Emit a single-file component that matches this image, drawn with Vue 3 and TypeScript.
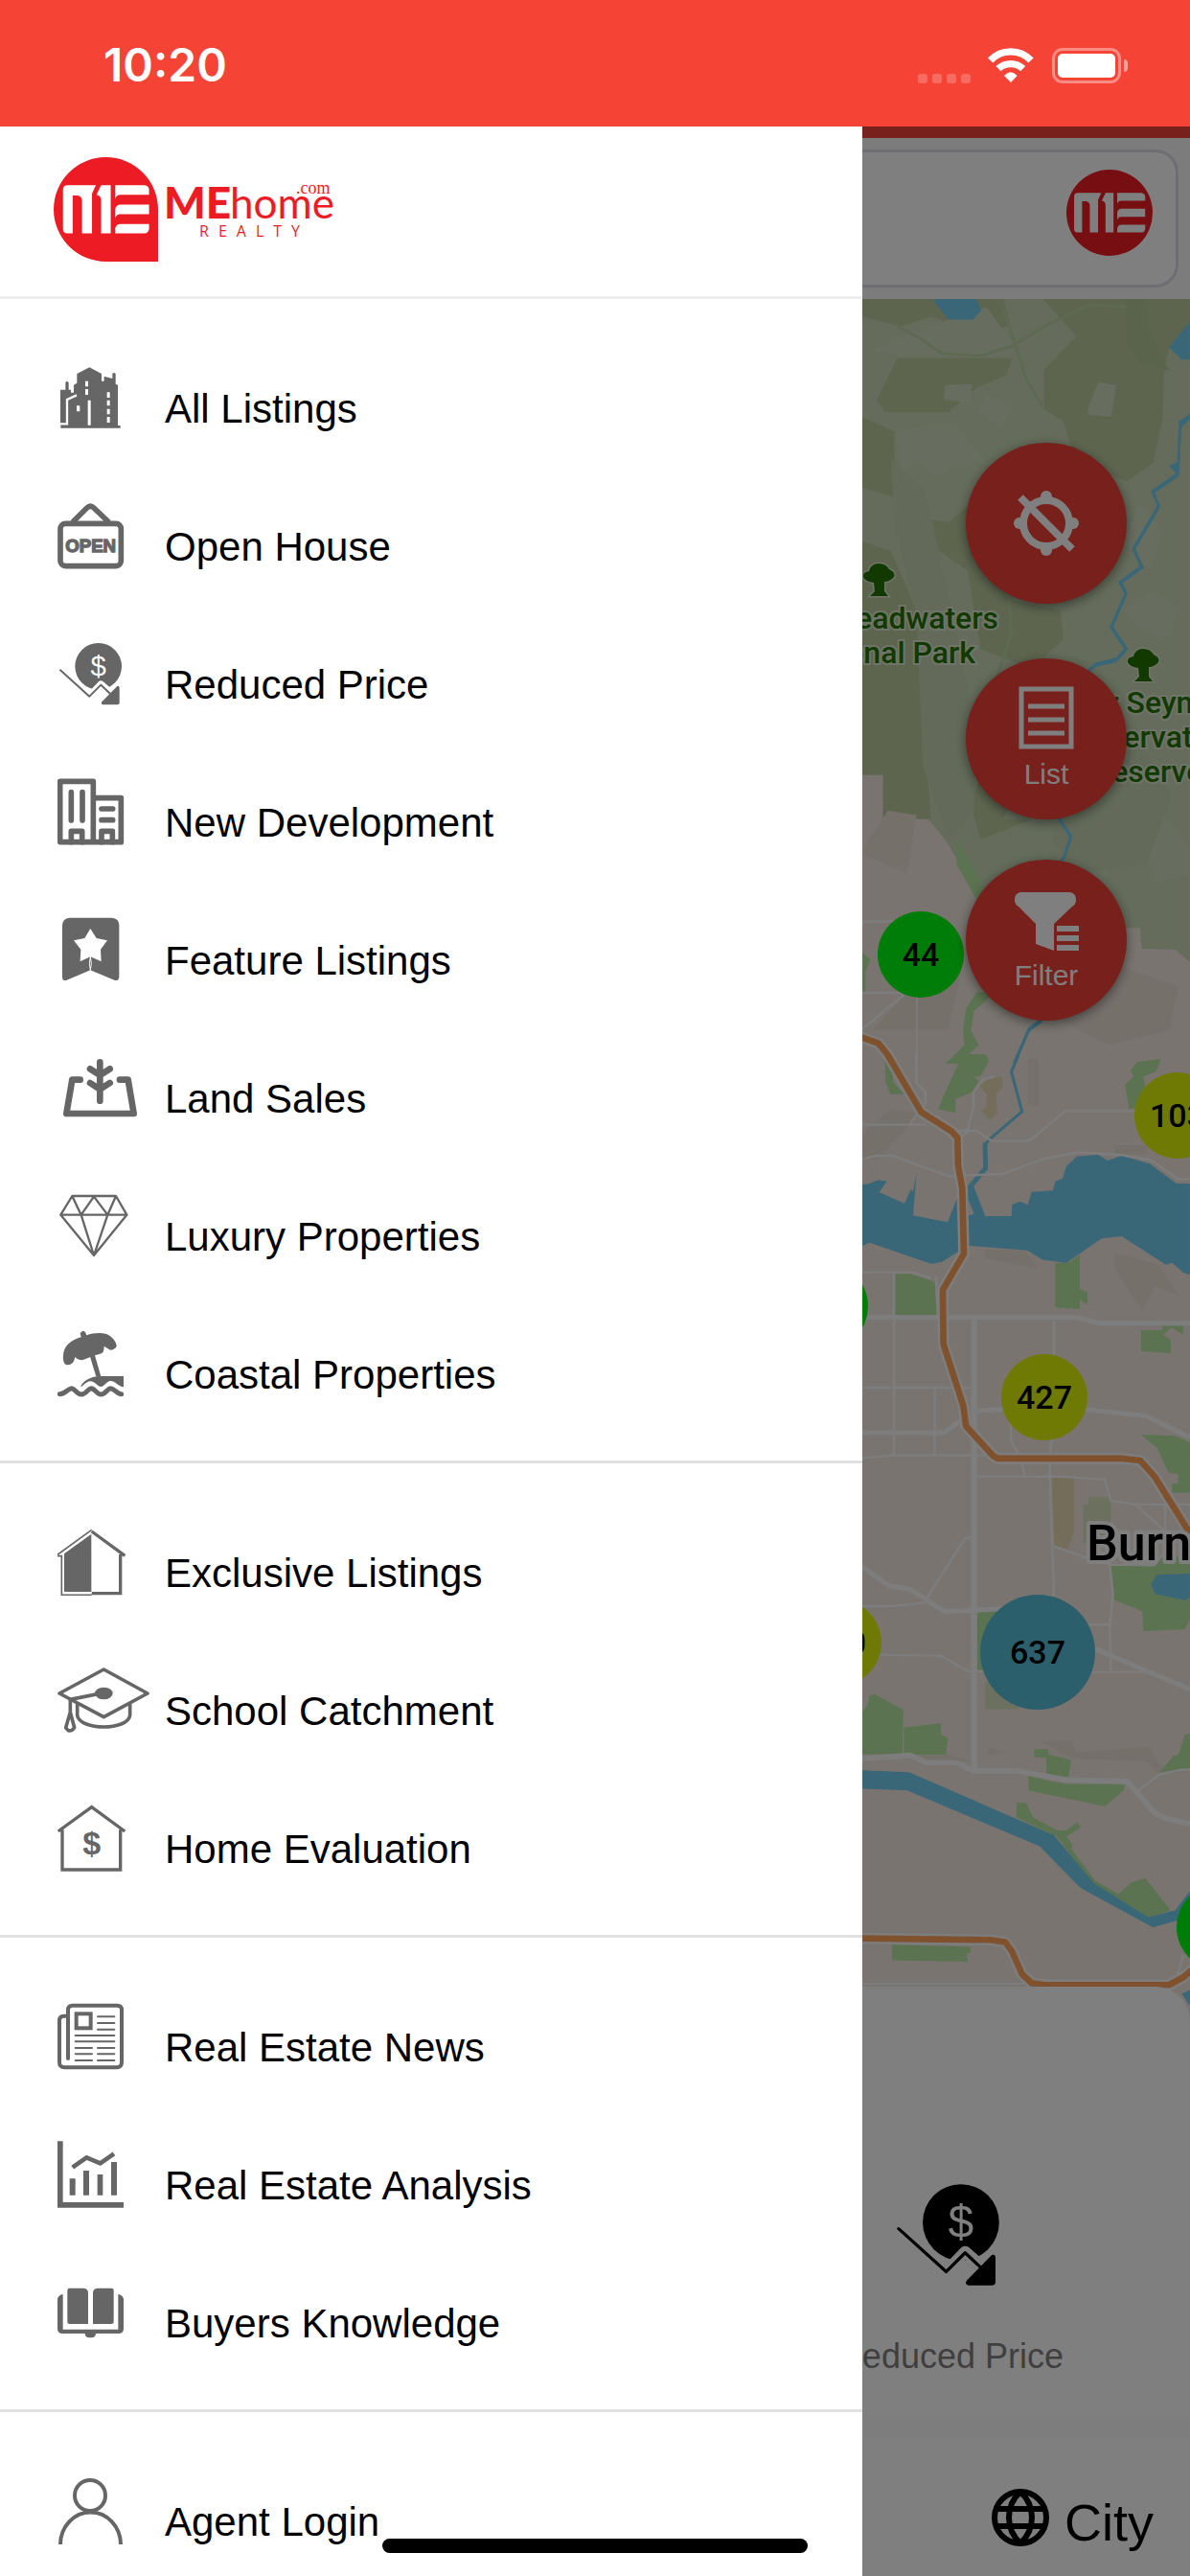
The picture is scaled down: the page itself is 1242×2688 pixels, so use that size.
<script setup lang="ts">
interface Glyph {
  text: string
  x: number
  y: number
  size: number
  weight: number
  fill: string
  outline: number
}

interface MenuItem {
  icon: string
  label: string
  glyph?: Glyph
}

const openGlyph: Glyph = { text: 'OPEN', x: 104, y: 161, size: 56, weight: 700, fill: '#666', outline: 4 }
const coinGlyph: Glyph = { text: '$', x: 128, y: 118, size: 88, weight: 400, fill: '#fff', outline: 0 }
const houseGlyph: Glyph = { text: '$', x: 107, y: 163, size: 102, weight: 700, fill: '#666', outline: 0 }

const sections: MenuItem[][] = [
  [
    { icon: 'listings', label: 'All Listings' },
    { icon: 'open', label: 'Open House', glyph: openGlyph },
    { icon: 'reduced', label: 'Reduced Price', glyph: coinGlyph },
    { icon: 'development', label: 'New Development' },
    { icon: 'feature', label: 'Feature Listings' },
    { icon: 'land', label: 'Land Sales' },
    { icon: 'luxury', label: 'Luxury Properties' },
    { icon: 'coastal', label: 'Coastal Properties' },
  ],
  [
    { icon: 'exclusive', label: 'Exclusive Listings' },
    { icon: 'school', label: 'School Catchment' },
    { icon: 'evaluation', label: 'Home Evaluation', glyph: houseGlyph },
  ],
  [
    { icon: 'news', label: 'Real Estate News' },
    { icon: 'analysis', label: 'Real Estate Analysis' },
    { icon: 'knowledge', label: 'Buyers Knowledge' },
  ],
  [{ icon: 'agent', label: 'Agent Login' }],
]

interface Cluster {
  x: number
  y: number
  r: number
  fill: string
  count?: string
}

const clusters: Cluster[] = [
  { x: 961, y: 996, r: 45, fill: '#00fa12', count: '44' },
  { x: 1229, y: 1164, r: 45, fill: '#def40a', count: '103' },
  { x: 861, y: 1363, r: 45, fill: '#00fa12' },
  { x: 1090, y: 1458, r: 45, fill: '#def40a', count: '427' },
  { x: 875, y: 1714, r: 45, fill: '#def40a', count: '130' },
  { x: 1083, y: 1724, r: 60, fill: '#54bed6', count: '637' },
  { x: 1273, y: 2011, r: 45, fill: '#00fa12' },
]
</script>

<template>
  <svg class="sprite" aria-hidden="true">
    <symbol id="mark" viewBox="169 492 324 324">
      <path d="M212 579H300L288 605V728H257V625Q255 611 240 611H228V728H212Q198 728 198 714V593Q198 579 212 579Z" />
      <path d="M316 579H346V728H316V625Q316 612 302 609Z" />
      <path d="M360 579H450Q465 581 465 594V609H375Q364 609 360 621Z" />
      <path d="M360 653Q362 639 377 639H465V669H375Q364 669 360 681Z" />
      <path d="M360 713Q362 699 377 699H465V714Q463 728 450 728H360Z" />
    </symbol>

    <symbol id="listings" viewBox="60 54 300 216">
      <path fill="currentColor" d="M69 140H85V118Q90 110 95 118V140H102V149H111V125L121 119V90L160 70L198 90V113H206V98L232 105V90Q237 84 242 90V122L249 125V252H257V260H70V252H69Z" />
      <path fill="none" stroke="#fff" stroke-width="7" d="M69 247H90V171L120 157" />
      <g fill="#fff">
        <path d="M147 113h9v17h-9zM147 138h9v18h-9zM215 148h9v17h-9zM215 173h9v17h-9zM215 200h9v17h-9zM215 225h9v18h-9zM155 173h9v78h-9zM120 190h10v18h-10z" />
      </g>
    </symbol>

    <symbol id="open" viewBox="60 486 300 216">
      <g fill="none" stroke="currentColor" stroke-width="17">
        <rect x="69" y="559" width="190" height="133" rx="16" />
        <path d="M107 555L152 510Q163 500 174 510L221 555" />
      </g>
    </symbol>

    <symbol id="reduced" viewBox="60 918 300 216">
      <circle cx="188" cy="1006" r="73" fill="currentColor" />
      <path fill="none" stroke="#fff" stroke-width="22" stroke-linejoin="round" d="M130 1087L160 1100L196 1062L240 1100" />
      <path fill="none" stroke="currentColor" stroke-width="6" stroke-linecap="round" stroke-linejoin="round" d="M69 1018L160 1100L196 1064L228 1094" />
      <path fill="currentColor" d="M247 1068Q254 1066 254 1074V1120Q254 1126 248 1126H202Q195 1124 199 1117Z" />
    </symbol>

    <symbol id="development" viewBox="60 90 300 216">
      <g fill="none" stroke="currentColor" stroke-width="17" stroke-linejoin="round" stroke-linecap="round">
        <path d="M68 106H172V296H68ZM172 158H259V296H172" />
        <path d="M103 140V228M138 140V228M198 192H233M198 227H233M103 296V262H137V296M198 296V262H232V296" />
      </g>
    </symbol>

    <symbol id="feature" viewBox="60 522 300 216">
      <path fill="currentColor" d="M98 533H230Q253 535 253 556V720Q251 731 240 729L163 697L87 729Q76 731 75 720V556Q76 535 98 533Z" />
      <path fill="#fff" d="M163 567L182 597L216 604L195 632L197 670L163 655L131 670L133 632L111 604L145 597Z" />
      <path stroke="#fff" stroke-width="3" fill="none" d="M163 655Q157 676 163 697Q169 676 163 655" />
    </symbol>

    <symbol id="land" viewBox="60 954 300 216">
      <path fill="none" stroke="currentColor" stroke-width="20" stroke-linejoin="round" stroke-linecap="round" d="M131 1040H106L88 1146H299L281 1040H255M193 985V1106M162 1006L193 1026L224 1006M162 1050L193 1070L224 1050" />
    </symbol>

    <symbol id="luxury" viewBox="60 126 300 216">
      <path fill="none" stroke="currentColor" stroke-width="7" stroke-linejoin="round" d="M106 144H243L277 203L174 330L70 203ZM70 203H277M106 144L134 203L174 146L217 203L243 144M134 203L174 330L217 203" />
    </symbol>

    <symbol id="coastal" viewBox="60 558 300 216">
      <g fill="currentColor">
        <path d="M92 673C74 674 76 640 82 625C90 605 115 590 134 586L131 574Q140 560 148 572L151 580C170 573 195 571 213 576C232 583 245 602 245 614Q240 625 225 626L206 614Q206 632 198 637L173 644L138 658Q124 658 115 648Q111 672 92 673Z" />
        <path d="M161 644L176 640L196 709H181Z" />
        <path d="M132 741C140 722 165 709 190 708H267V742C252 742 242 723 226 723C213 723 208 741 196 741C184 741 178 724 163 724C148 724 142 741 132 741Z" />
      </g>
      <path fill="none" stroke="currentColor" stroke-width="15" stroke-linecap="round" d="M67 764C85 764 92 747 104 746C115 747 120 765 135 765C150 765 155 747 165 746C178 747 183 765 196 765C210 765 216 747 226 746C240 747 245 764 260 764" />
    </symbol>

    <symbol id="exclusive" viewBox="60 99 300 216">
      <path fill="none" stroke="currentColor" stroke-width="10" d="M167 114L271 190M257 186V308H167" />
      <path fill="none" stroke="currentColor" stroke-width="5" d="M167 109L60 187V191H73V313H167" />
      <path fill="currentColor" d="M81 184L166 122V303H81Z" />
    </symbol>

    <symbol id="school" viewBox="60 531 300 216">
      <g fill="none" stroke="currentColor" stroke-width="11" stroke-linejoin="round">
        <path d="M205 546L342 621L205 695L66 621ZM122 652V690C130 738 280 738 287 690V652" />
        <path d="M190 622L100 640V680L86 728Q99 748 113 728L100 680" />
      </g>
      <ellipse cx="205" cy="621" rx="28" ry="19" fill="currentColor" />
    </symbol>

    <symbol id="evaluation" viewBox="60 963 300 216">
      <path fill="none" stroke="currentColor" stroke-width="10" d="M62 1053L167 977L271 1053M75 1048V1173H257V1048" />
    </symbol>

    <symbol id="news" viewBox="60 84 300 216">
      <g fill="none" stroke="currentColor" stroke-linecap="round">
        <path stroke-width="12" d="M93 264V112Q93 98 107 98H247Q261 98 261 112V276Q261 292 245 292H82Q66 292 66 276V145Q66 131 80 131H90" />
        <rect stroke-width="12" x="119" y="124" width="45" height="45" />
        <path stroke-width="6" d="M186 133H238M186 153H238M186 173H238M116 192H238M116 211H238M116 231H168M186 231H238M116 250H168M186 250H238M116 270H168M186 270H238" />
      </g>
    </symbol>

    <symbol id="analysis" viewBox="60 516 300 216">
      <path fill="currentColor" d="M60 523H77V714H267V731H60ZM98 640H116V692H98ZM141 615H159V692H141ZM185 627H202V692H185ZM228 588H246V692H228Z" />
      <path fill="none" stroke="currentColor" stroke-width="14" d="M107 605L151 574L194 592L237 562" />
    </symbol>

    <symbol id="knowledge" viewBox="60 948 300 216">
      <g fill="currentColor">
        <path d="M98 983H142Q156 984 156 998V1095H98Q91 1095 91 1088V990Q91 983 98 983ZM185 983H229Q236 983 236 990V1088Q236 1095 229 1095H171V998Q171 984 185 983Z" />
        <path d="M60 1016Q64 1004 77 1002V1112H250V1002Q263 1004 267 1016V1110Q267 1125 251 1125H180Q179 1138 166 1138H160Q147 1138 146 1125H76Q60 1125 60 1110Z" />
      </g>
    </symbol>

    <symbol id="agent" viewBox="60 2583 100 72">
      <g fill="none" stroke="currentColor" stroke-width="4">
        <circle cx="94" cy="2604" r="16" />
        <path d="M63 2655A31 33 0 0 1 126 2655" />
      </g>
    </symbol>
  </svg>

  <div class="app">
    <header class="status">
      <time class="clock">10:20</time>
      <div class="status-icons">
        <span class="signal"><i></i><i></i><i></i><i></i></span>
        <svg class="wifi" viewBox="515 148 144 108" aria-label="Wi-Fi">
          <g fill="none" stroke="#fff" stroke-width="22">
            <path d="M523 187A87 87 0 0 1 650 187" />
            <path d="M548 213A56 56 0 0 1 625 213" />
          </g>
          <path fill="#fff" d="M566 235Q586 213 607 235L587 256Z" />
        </svg>
        <span class="battery"><i></i></span>
      </div>
    </header>

    <div class="screen">
      <main class="page">
        <div class="topbar"></div>
        <div class="search">
          <label class="search-box">
            <input type="search" aria-label="Search listings" />
            <svg class="badge" viewBox="0 0 90 90" aria-hidden="true">
              <circle cx="45" cy="45" r="45" fill="#ed1c24" />
              <use href="#mark" width="90" height="90" fill="#fff" />
            </svg>
          </label>
        </div>

        <div class="map">
          <svg class="map-canvas" viewBox="0 312 1242 1797" preserveAspectRatio="xMaxYMin slice" role="img" aria-label="Map">
            <rect y="312" width="1242" height="1797" fill="#f2e9df" />

            <!-- mountain terrain -->
            <g transform="translate(890 310) scale(.3333 .5102)">
              <path fill="#cad9b6" d="M0 0H1056V1360L1010 1335L905 1333L900 1290H858L700 1350L600 1300L400 1230L290 1110L235 1067H95V977H0Z" />
              <g fill="#bbca9f">
                <path d="M590 0H1056V50L990 105L975 155L970 250L940 340L860 377L700 340L660 255L600 230L598 150L700 80Z" />
                <path d="M30 0H470L495 60L380 75L250 40L150 60L30 40ZM140 125H500L480 160L390 185L300 235H100L75 210Z" />
                <path d="M30 245L130 275V390L180 450L300 460L420 395L500 430V620L650 640L660 700L560 760L400 720L360 560L230 500L160 415L30 390Z" />
                <path d="M30 500L120 520L200 640L215 800L245 1067H95V977H30Z" />
                <path d="M470 1068L560 1068L400 1110L370 1040L410 960L520 1000Z" />
              </g>
              <g fill="#cfdcbf">
                <path d="M165 80L240 60L420 20L500 95L490 120H140L60 110ZM290 180L375 178L365 215L285 210ZM740 220L770 175L825 180L810 245L735 240ZM420 200L495 225L465 265L390 235ZM135 280L200 265L320 262L420 340H310L270 370L200 335L160 365Z" />
                <path d="M850 640L950 600L1020 640L980 700L900 680ZM880 1060L960 1050L1056 1130V1180L950 1200ZM740 1120L800 1160L790 1200L730 1180ZM240 830L280 790L320 900L300 990L250 1000ZM850 500L900 420L970 480L930 560Z" />
              </g>
              <path fill="#c6d5b2" d="M120 330L230 400L330 700L380 860L380 1050L300 1110L220 960L200 650L130 470ZM690 920L840 850L1000 1020L920 1160L700 1180L620 1110Z" />
              <path fill="#b4c898" d="M850 0H915L930 70L990 150L900 135L860 100Z" />
              <path fill="none" stroke="#bdd3a6" stroke-width="3" vector-effect="non-scaling-stroke" d="M470 20L510 100L545 170L600 230M140 60L200 80L280 115L400 120L500 100L600 60L740 15L860 20M490 610L495 690L450 780" />
              <g fill="#b7e6a0">
                <path d="M325 1105L370 1160L395 1185L410 1215L390 1235L325 1160ZM390 1420L440 1425L380 1460L370 1500L395 1530L330 1568H290L350 1530L345 1500L355 1455ZM30 1340L55 1355L40 1380V1420H30Z" />
              </g>
              <g fill="#ece1d6">
                <path d="M30 1130L110 1050L200 1060L170 1180L30 1140ZM700 1380L840 1370L1020 1410L990 1500L800 1530L650 1480ZM60 1500L200 1400L340 1380L300 1500Z" />
              </g>
              <g fill="#75cfef">
                <path d="M255 10L300 46H375L403 28L388 4H258ZM990 103L1056 50V128H1030ZM1026 252L1056 238V250L1030 266ZM990 345L1018 337V365Z" />
              </g>
              <path fill="none" stroke="#75cfef" stroke-width="9" d="M1026 252L1018 363L940 398L958 428L880 515L905 552L838 584L856 606L810 675L856 720L826 742L760 752L700 790L640 1060L683 1104L662 1145L620 1180L590 1480L552 1498L505 1568" />
              <g fill="none" stroke="#fbfbfd" stroke-width="5">
                <path d="M30 1280L40 1277H160M30 1423H230M30 1497L160 1427M201 1430V1568" />
              </g>
            </g>

            <!-- city, inlet and river -->
            <g transform="translate(890 1100) scale(.3333)">
              <g fill="#ebe0d5">
                <path d="M550 15H582V165L550 155ZM820 620L960 660L1020 755L945 725L905 805L820 670ZM415 610L540 615L580 672L415 640ZM820 285H920V315H820ZM30 250L120 170L210 185L80 330H30Z" />
                <path d="M585 2150H685L700 2185L930 2168L955 2220L1056 2250L955 2250L920 2215L685 2205ZM415 2200L430 2168L478 2184ZM160 2180L195 2166L380 2215L200 2216Z" />
              </g>
              <g fill="#b7e6a0">
                <path d="M100 0H125V85L160 125H118L102 85ZM330 30L360 0H415L427 20L400 70H380L395 85L373 120L322 140V184L267 172ZM870 50L890 25L965 15L950 55L910 70L925 160L865 172L853 95L880 70Z" />
                <path d="M133 688H180L257 712L262 817H133ZM634 655L680 650L711 628V735L735 745V785L711 768V798L634 793ZM903 864H970V850H1035V878L998 856L972 878L996 895V936L903 930Z" />
                <path d="M903 1191L1010 1195L1056 1215V1373H1000V1345H1019V1315L988 1310L955 1235Z" />
                <path d="M808 1600H945L970 1565L1056 1580V1768L1040 1800L910 1806L907 1745L818 1708ZM390 1748L470 1740L440 1930H390Z" />
                <path d="M30 2060L48 2035L52 2008L70 2004L159 2053L155 2192H30ZM160 2108L276 2095V2130L298 2140L292 2193H160ZM568 2176H612V2192L684 2210L676 2262H606V2203L568 2200ZM550 2260L660 2285L852 2286L848 2305L790 2355L550 2305ZM1056 2127L1040 2130L1020 2193L1003 2198L962 2248L1056 2235Z" />
                <path d="M513 2343H543L565 2390L640 2430H668L703 2405L714 2420L670 2450L688 2475L686 2490L760 2588L832 2630L873 2592L917 2580L995 2680L925 2705L750 2600L640 2450L513 2390ZM123 2788L369 2795V2812L357 2815L360 2841L123 2837Z" />
              </g>
              <g fill="#e8dab4">
                <path d="M398 100L430 72H470L468 105L448 125L453 185L430 208L403 178L418 165L420 125ZM622 1326H693V1500L672 1551L632 1540Z" />
              </g>
              <path fill="#d7e2bd" d="M738 1386H808V1480L790 1530H722V1410H738ZM415 1968L520 1960V2051H415Z" />
              <g fill="#75cfef">
                <path d="M30 407H45L80 394L107 398L83 432L162 467L182 423L189 430L200 372L189 505L297 526L325 455L345 420L362 420L378 412L415 507H497L499 470L525 461L548 472L560 431L627 427L634 398L657 389L669 350L702 320L767 314L798 333L842 318L930 343L1014 405H1056V690L1036 685L1000 653L982 660L842 570L780 577L669 653L596 644L546 614L365 600L330 618L280 650L247 657L53 590L30 600Z" />
                <path d="M30 2242L176 2248L630 2445L755 2595L925 2702L1010 2680L1056 2620V2700L940 2734L713 2610L585 2480L170 2305L30 2300Z" />
                <path d="M933 1660L953 1630L1056 1626V1700L1043 1710L947 1690ZM1030 2942L1056 2930V3030H1090Z" />
              </g>
              <path fill="#f2e9df" d="M362 505L380 500L362 455Z" />
              <path fill="none" stroke="#75cfef" stroke-width="9" d="M520 0L497 55L530 180L430 265L412 285" />
              <path fill="none" stroke="#75cfef" stroke-width="15" d="M414 278L416 357L362 422" />

              <g fill="none" stroke="#fbfbfd" stroke-linejoin="round">
                <path stroke-width="7" d="M199 0V88L227 118L228 150L176 222M30 221H230M330 240H388L436 272H545L560 266L665 178H880M445 70L405 80L378 120V165L358 245L340 260M30 328L75 318H125L300 382L470 375L600 327L706 308L840 315L935 332L1018 391H1056M30 683H185L245 702" />
                <path stroke-width="7" d="M129 683V1255M257 1048V1255M30 1044H375M30 1265L125 1256H430M630 835V950M260 695L268 820M495 1155V1210L518 1250M625 1200L617 1250L618 1320L630 1700M390 1322L660 1323L790 1332L808 1398L880 1410H1056M530 1285L538 1320M978 1410V1500M885 1410L985 1500" />
                <path stroke-width="7" d="M375 1512L352 1515L222 1718L125 1728H30M630 1540L740 1580L805 1598L945 1600L975 1560M805 1598L815 1690L805 1790L808 1932M740 1786H805M85 1880L277 1884L362 1932H415M750 1935H930M895 2305L960 2255L1030 2240H1056M30 2910H550M1015 2890L1035 2820" />
                <path stroke-width="15" d="M45 824H700L770 842H1056M30 1185H285L350 1140M390 1116L470 1112M730 1112L920 1133L1056 1200M30 1605L115 1665L180 1675L275 1738L295 1745L480 1736M755 1860L930 1935L1056 1988" />
                <path stroke-width="19" d="M380 825V2245" />
                <path stroke-width="17" d="M30 2206L180 2195L230 2218H325L378 2244H515L670 2272L860 2277L945 2375L980 2393L1056 2410" />
              </g>
              <g fill="none" stroke-linejoin="round">
                <path stroke="#fbfbfd" stroke-width="35" d="M0 -66L30 -52L80 -34L108 0L215 182L310 242L328 262L330 350L343 420L348 625L282 738L284 908L346 1100L355 1165L440 1258L455 1266H845L900 1272L945 1322L1056 1500M30 2768L430 2773L478 2780L498 2808L530 2880L560 2908L600 2914H990L1035 2890L1065 2865" />
                <path stroke="#ffa45a" stroke-width="20" d="M0 -66L30 -52L80 -34L108 0L215 182L310 242L328 262L330 350L343 420L348 625L282 738L284 908L346 1100L355 1165L440 1258L455 1266H845L900 1272L945 1322L1056 1500M30 2768L430 2773L478 2780L498 2808L530 2880L560 2908L600 2914H990L1035 2890L1065 2865" />
              </g>
            </g>

            <!-- parks -->
            <g fill="#247400" stroke="#dfe8d2" stroke-width="3" paint-order="stroke">
              <path d="M901 602Q900 597 907 596Q909 588 917 588Q925 588 928 594Q935 597 933 602Q929 607 923 607V617L927 622H908L913 617L912 608Q903 607 901 602Z" />
              <path d="M1177 691Q1176 686 1183 685Q1185 677 1193 677Q1201 677 1204 683Q1211 686 1209 691Q1205 696 1199 696V706L1203 711H1184L1189 706L1188 697Q1179 696 1177 691Z" />
            </g>
            <g class="park">
              <text x="1042" y="656" text-anchor="end">Lynn Headwaters</text>
              <text x="1018" y="692" text-anchor="end">Regional Park</text>
              <text x="1080" y="744">Lower Seymour</text>
              <text x="1099" y="780">Conservation</text>
              <text x="1140" y="816">Reserve</text>
            </g>
            <text class="city-name" x="1134" y="1628">Burnaby</text>

            <g v-for="c in clusters" :key="`${c.x}-${c.y}`" class="cluster">
              <circle :cx="c.x" :cy="c.y" :r="c.r" :fill="c.fill" />
              <text v-if="c.count" :x="c.x" :y="c.y + 12" text-anchor="middle">{{ c.count }}</text>
            </g>
          </svg>

          <div class="fabs">
            <button class="fab locate" type="button" aria-label="Location off">
              <svg width="68" height="68" viewBox="0 0 68 68">
                <circle cx="34" cy="34" r="24" fill="none" stroke="#fff" stroke-width="8" />
                <g fill="#fff">
                  <circle cx="34" cy="6" r="6" />
                  <circle cx="34" cy="62" r="6" />
                  <circle cx="6" cy="34" r="6" />
                  <circle cx="62" cy="34" r="6" />
                </g>
                <path stroke="#fff" stroke-width="8" d="M7 7L61 61" />
              </svg>
            </button>
            <button class="fab" type="button">
              <svg width="68" height="66" viewBox="0 0 68 66">
                <g fill="none" stroke="#fff" stroke-width="5">
                  <rect x="8" y="3" width="52" height="60" />
                  <path d="M15 21H53M15 35H53M15 49H53" />
                </g>
              </svg>
              List
            </button>
            <button class="fab" type="button">
              <svg width="68" height="66" viewBox="0 0 68 66">
                <g fill="#fff">
                  <path d="M7 5H59Q65 6 65 13Q65 18 61 20L42 38V66L23 59V38L5 20Q1 18 1 13Q1 6 7 5Z" />
                  <path d="M45 40H68V46H45ZM45 50H68V56H45ZM45 60H68V66H45Z" />
                </g>
              </svg>
              Filter
            </button>
          </div>
        </div>

        <section class="sheet">
          <div class="shortcuts">
            <a class="shortcut" href="#reduced-price">
              <svg width="118" height="118" viewBox="0 0 216 216">
                <use href="#reduced" width="300" height="216" />
                <text :x="coinGlyph.x" :y="coinGlyph.y" :font-size="coinGlyph.size" :fill="coinGlyph.fill" text-anchor="middle">{{ coinGlyph.text }}</text>
              </svg>
              <span>Reduced Price</span>
            </a>
          </div>
          <nav class="tabs">
            <a class="tab" href="#city">
              <svg width="60" height="60" viewBox="0 0 60 60" fill="none" stroke="#000" stroke-width="6">
                <circle cx="30" cy="30" r="27" />
                <path d="M30 3C14 18 14 42 30 57C46 42 46 18 30 3ZM5 21H55M5 39H55" />
              </svg>
              <span>City</span>
            </a>
          </nav>
        </section>
      </main>

      <div class="scrim"></div>

      <aside class="drawer">
        <a class="brand" href="#home" aria-label="MEhome Realty">
          <svg width="300" height="110" viewBox="0 0 300 110">
            <path fill="#ed1c24" d="M54.500 0A54.500 54.500 0 0 1 109 54.500V109H54.500A54.500 54.500 0 0 1 54.500 0Z" />
            <use href="#mark" width="109" height="109" fill="#fff" />
            <g fill="#ed1c24">
              <text class="brand-me" x="115" y="64">ME</text>
              <text class="brand-home" x="184" y="64">home</text>
              <text class="brand-com" x="253" y="38">.com</text>
              <text class="brand-realty" x="152" y="83">REALTY</text>
            </g>
          </svg>
        </a>
        <nav>
          <ul v-for="(items, i) in sections" :key="i" class="section">
            <li v-for="item in items" :key="item.icon">
              <a class="item" :href="`#${item.icon}`">
                <svg class="item-icon" viewBox="0 0 300 216" aria-hidden="true">
                  <use :href="`#${item.icon}`" width="300" height="216" />
                  <text
                    v-if="item.glyph"
                    :x="item.glyph.x"
                    :y="item.glyph.y"
                    :font-size="item.glyph.size"
                    :font-weight="item.glyph.weight"
                    :fill="item.glyph.fill"
                    :stroke="item.glyph.fill"
                    :stroke-width="item.glyph.outline"
                    text-anchor="middle"
                  >{{ item.glyph.text }}</text>
                </svg>
                <span class="item-label">{{ item.label }}</span>
              </a>
            </li>
          </ul>
        </nav>
      </aside>
    </div>

    <div class="home-indicator"></div>
  </div>
</template>

<style>
body {
  margin: 0;
}
</style>

<style scoped>
.sprite {
  position: absolute;
  width: 0;
  height: 0;
}

.app {
  position: relative;
  display: flex;
  flex-direction: column;
  height: 100vh;
  overflow: hidden;
  background: #fff;
  color: #000;
  font-family: "Liberation Sans", Arial, sans-serif;
}

a {
  color: inherit;
  text-decoration: none;
}

svg {
  display: block;
}

/* status bar */
.status {
  display: flex;
  flex: none;
  align-items: center;
  justify-content: space-between;
  box-sizing: border-box;
  height: 132px;
  padding: 4px 65px 0 108px;
  background: #f54336;
}

.clock {
  color: #fff;
  font: 600 48px/60px Inter, sans-serif;
}

.status-icons {
  display: flex;
  align-items: center;
}

.signal {
  display: flex;
  gap: 5px;
  align-self: flex-end;
  margin-right: 18px;
}

.signal i {
  width: 10px;
  height: 10px;
  border-radius: 3px;
  background: rgba(255, 255, 255, 0.22);
}

.wifi {
  width: 48px;
  height: 36px;
}

.battery {
  position: relative;
  box-sizing: border-box;
  width: 72px;
  height: 37px;
  margin: 0 7px 0 19px;
  padding: 3px;
  border: 3px solid rgba(255, 255, 255, 0.4);
  border-radius: 11px;
}

.battery i {
  display: block;
  height: 25px;
  border-radius: 5px;
  background: #fff;
}

.battery::after {
  position: absolute;
  top: 9px;
  right: -10px;
  width: 4px;
  height: 13px;
  border-radius: 0 4px 4px 0;
  background: rgba(255, 255, 255, 0.5);
  content: "";
}

/* page below the drawer */
.screen {
  position: relative;
  display: flex;
  flex: 1;
  min-height: 0;
}

.page {
  display: flex;
  flex: 1;
  flex-direction: column;
  min-width: 0;
}

.topbar {
  flex: none;
  height: 12px;
  background: #f04036;
}

.search {
  flex: none;
  padding: 12px;
  background: #f9f9f9;
}

.search-box {
  display: flex;
  align-items: center;
  box-sizing: border-box;
  height: 144px;
  padding: 0 24px 12px;
  border: 3px solid #dcdce4;
  border-radius: 24px;
  background: #fff;
}

.search-box input {
  flex: 1;
  min-width: 0;
  border: 0;
  outline: 0;
  background: transparent;
  font: 42px "Liberation Sans", sans-serif;
}

.badge {
  width: 90px;
  height: 90px;
}

.map {
  position: relative;
  flex: 1;
  min-height: 0;
  overflow: hidden;
}

.map-canvas {
  width: 100%;
  height: 100%;
}

.park {
  fill: #247400;
  stroke: #dfe8d2;
  stroke-width: 4px;
  paint-order: stroke;
  font: 500 32px Roboto, sans-serif;
}

.city-name {
  fill: #000;
  stroke: #fff;
  stroke-width: 8px;
  stroke-linejoin: round;
  paint-order: stroke;
  font: 500 52px Roboto, sans-serif;
}

.cluster text {
  fill: #000;
  font: 500 34px Roboto, sans-serif;
}

.fabs {
  position: absolute;
  top: 150px;
  right: 66px;
  display: flex;
  flex-direction: column;
  gap: 42px;
}

.fab {
  display: flex;
  flex-direction: column;
  gap: 8px;
  align-items: center;
  justify-content: center;
  width: 168px;
  height: 168px;
  padding: 0;
  border: 0;
  border-radius: 50%;
  background: #f04036;
  box-shadow: 0 3px 12px rgba(0, 0, 0, 0.45);
  color: #fff;
  font: 30px/36px "Liberation Sans", sans-serif;
}

.locate {
  margin-bottom: 15px;
}

.sheet {
  position: relative;
  flex: none;
  margin-top: -36px;
  border-radius: 36px 36px 0 0;
  background: #fff;
}

.shortcuts {
  display: flex;
  justify-content: flex-end;
  padding: 198px 132px 40px;
}

.shortcut {
  display: flex;
  flex-direction: column;
  gap: 48px;
  align-items: center;
}

.shortcut span {
  color: #7e7e7e;
  font-size: 36px;
  line-height: 44px;
}

.tabs {
  display: flex;
  justify-content: flex-end;
  box-sizing: border-box;
  height: 167px;
  padding: 53px 38px 0;
  border-top: 23px solid #f8fbf9;
}

.tab {
  display: flex;
  gap: 16px;
  align-items: flex-start;
}

.tab span {
  font-size: 54px;
  line-height: 70px;
}

.scrim {
  position: absolute;
  inset: 0;
  background: rgba(0, 0, 0, 0.5);
}

/* drawer */
.drawer {
  position: absolute;
  top: 0;
  bottom: 0;
  left: 0;
  width: 73%;
  max-width: 900px;
  overflow: hidden;
  background: #fff;
}

.brand {
  display: block;
  padding: 32px 56px 35px;
  border-bottom: 3px solid #eee;
}

.brand-me {
  font: 900 46px Lato, sans-serif;
}

.brand-home {
  font: 400 44px Lato, sans-serif;
}

.brand-com {
  font: 18px "Liberation Serif", serif;
}

.brand-realty {
  font: 16px "Open Sans", sans-serif;
  letter-spacing: 10px;
}

.section {
  margin: 0;
  padding: 30px 0;
  list-style: none;
}

.section + .section {
  border-top: 3px solid #e0e0e0;
}

.item {
  display: flex;
  gap: 12px;
  align-items: center;
  height: 144px;
  padding: 0 60px;
}

.item-icon {
  flex: none;
  width: 100px;
  height: 72px;
  color: #666;
}

.item-label {
  padding-top: 26px;
  font-size: 42px;
  line-height: 48px;
}

.home-indicator {
  position: absolute;
  bottom: 24px;
  left: 50%;
  width: 444px;
  height: 15px;
  margin-left: -222px;
  border-radius: 8px;
  background: #000;
}
</style>
